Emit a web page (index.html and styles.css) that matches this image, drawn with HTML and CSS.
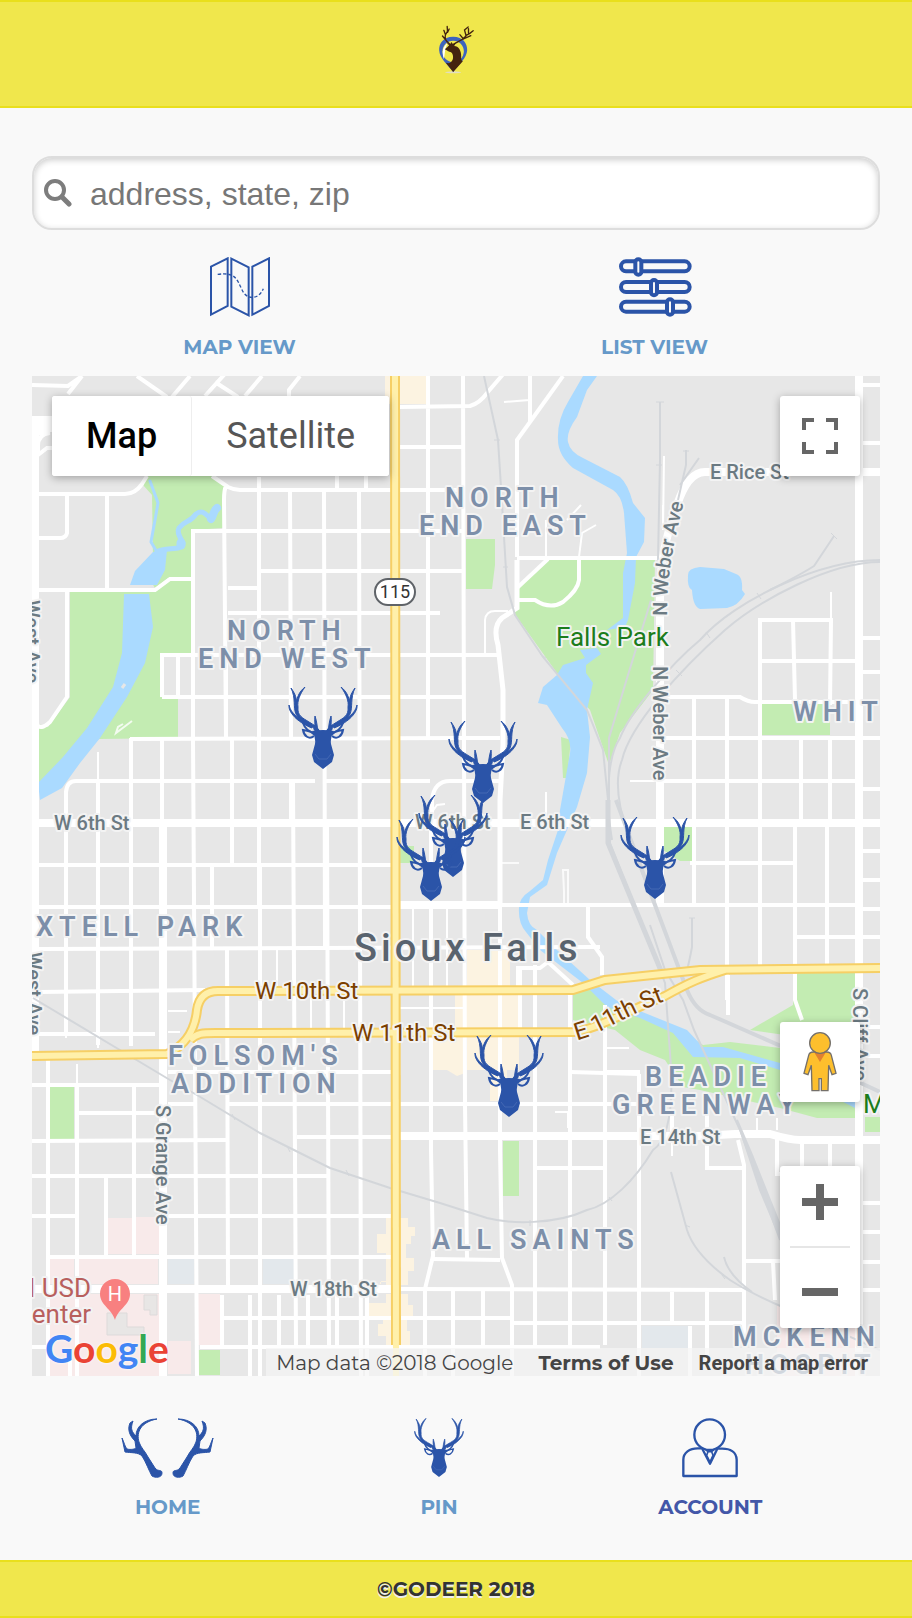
FILE: index.html
```html
<!DOCTYPE html>
<html lang="en">
<head>
  <meta charset="UTF-8">
  <meta name="viewport" content="width=device-width, initial-scale=1.0">
  <title>GoDeer</title>
  <link rel="stylesheet" href="styles.css">
</head>
<body>
  <!-- shared shapes -->
  <svg class="defs" width="0" height="0" aria-hidden="true">
    <defs>
      <g id="antler" stroke="#2b54a8" stroke-width="1">
        <path d="M28 44 C22 35 12 35 8 27 C5 21 8 11 3 1 C8 8 9 12 8 17 C9 9 12 4 17 0 C12 7 9 14 10 20 C9 29 15 31 21 35 C26 38 30 40 32 45 Z"/>
        <path d="M24 41 C13 37 0 27 1 18 C3 27 10 31 24 38 Z"/>
        <path d="M26 43 C28 38 26 34 27 29 C29 35 29 39 30 44 Z"/>
        <path d="M27 48 C22 43 20 44 15 43 C16 49 21 53 26 49" fill="none" stroke-width="2"/>
        <path d="M26 46 C19 44 16 39 15 36" fill="none" stroke-width="2"/>
      </g>
      <symbol id="deer" viewBox="0 0 70 83">
        <g fill="#2b54a8">
          <use href="#antler"/>
          <use href="#antler" transform="matrix(-1 0 0 1 70 0)"/>
          <path d="M24 44 Q35 42 46 44 Q42 50 43 57 L46 68 L44 75 L35 82 L26 75 L24 68 L27 57 Q28 50 24 44 Z"/>
          <path d="M27 67 L31 72 H39 L43 67" fill="none" stroke="#4468b4" stroke-width="1"/>
        </g>
      </symbol>
      <path id="half-antlers" stroke="#2b54a8" stroke-width="1" d="M36 1 C20 4 15 14 18 24 C20 30 24 33 27 39 L34 50 C37 54 41 51 41 55 C41 60 34 60 31 58 C28 53 25 44 21 38 C17 34 10 35 4 34 L1 20 C3 24 4 29 6 31 C10 32 14 31 15 30 L14 23 C9 18 6 12 9 5 L12 3 C9 11 11 14 15 18 C15 8 24 1 36 1 Z"/>
    </defs>
  </svg>

  <header class="header">
    <a href="#" class="logo" aria-label="GoDeer">
      <svg viewBox="0 0 110 150" width="37" height="50">
        <ellipse cx="45" cy="145" rx="24" ry="3" fill="#e3dfc0"/>
        <path d="M45 38 C14 38 2 60 3 79 C4 103 29 123 45 144 C61 123 86 102 87 79 C88 59 75 38 45 38 Z" fill="#3d63bd"/>
        <circle cx="45" cy="82" r="32" fill="#f0e74c"/>
        <path d="M30 55 C14 68 10 84 17 105 C21 92 18 76 30 55 Z" fill="#fff"/>
        <path d="M20 76 Q29 68 33 64 L25 56 L36 60 L40 54 L44 60 L54 56 L48 66 C61 66 70 80 69 98 C69 105 69 109 74 112 L45 144 L23 116 Q37 121 43 108 C48 96 42 82 33 83 Z" fill="#43240f"/>
        <g fill="none" stroke="#43240f" stroke-width="4" stroke-linecap="round">
          <path d="M34 60 C24 51 18 46 22 32 L28 22 L27 7 M22 32 L17 19 M28 25 L33 15 M21 46 L13 36"/>
          <path d="M47 60 C62 50 76 49 84 34 L95 28 L105 20 M84 36 L79 18 L90 9 M91 30 L91 14 M76 45 L65 32 M76 45 L98 35"/>
        </g>
      </svg>
    </a>
  </header>

  <main class="main">
    <form class="search">
      <label for="search" class="search-icon" aria-label="Search">
        <svg viewBox="0 0 28 28" width="28" height="28" fill="none" stroke="#7d7d7d">
          <circle cx="11" cy="11" r="9" stroke-width="4"/>
          <path d="M18 18 L25 25" stroke-width="5" stroke-linecap="round"/>
        </svg>
      </label>
      <input type="text" id="search" placeholder="address, state, zip">
    </form>

    <nav class="views">
      <a href="#">
        <svg viewBox="0 0 180 180" width="60" height="60" fill="none" stroke="#2b54a8" stroke-width="6">
          <path d="M3 29 L53 4 V147 L3 173 Z M64 5 L116 31 V175 L64 149 Z M127 29 L177 4 V147 L127 173 Z"/>
          <path d="M23 52 C75 45 80 65 95 96 C108 130 145 130 160 95" stroke-width="4" stroke-dasharray="10 6"/>
        </svg>
        <span>MAP VIEW</span>
      </a>
      <a href="#">
        <svg viewBox="0 0 220 180" width="74" height="60" fill="#f9f9f9" stroke="#2b54a8" stroke-width="12">
          <rect x="8" y="13" width="206" height="30" rx="15"/>
          <rect x="8" y="75" width="206" height="30" rx="15"/>
          <rect x="8" y="134" width="206" height="30" rx="15"/>
          <rect x="51" y="7" width="18" height="46" rx="9"/>
          <rect x="98" y="69" width="18" height="46" rx="9"/>
          <rect x="146" y="127" width="18" height="46" rx="9"/>
        </svg>
        <span>LIST VIEW</span>
      </a>
    </nav>

    <section class="map">
      <svg class="map-canvas" viewBox="32 376 848 1000">
        <!-- areas -->
        <g fill="#f8eaea">
          <path d="M107 1218H132V1254H107Z M136 1217H159V1254H136Z M49 1259H74V1284H49Z M79 1259H158V1284H79Z M49 1294H159V1376H49Z M195 1294H220V1345H195Z M168 1341H191V1374H168Z M777 1305H857V1376H777Z"/>
        </g>
        <path d="M107 1313H127V1327H144V1335H107Z M144 1295H157V1315H150V1310H144Z" fill="#e8e6e5" stroke="#dddada"/>
        <path d="M168 1259H194V1284H168Z M263 1259H294V1284H263Z M642 1326H688V1348H642Z" fill="#e3e8ec"/>
        <g fill="#fcf3e1">
          <path d="M385 376H426V404H385Z M467 950H510V1030H519V1070H467Z M455 993H519V1030H455Z M433 1037H465V1073L457 1076L447 1070H433Z M490 1070H507V1101H490Z"/>
          <path d="M386 1218H408V1227H415V1236H411V1244H406V1258H414V1271H408V1285H386V1281H381V1284H380V1282H386V1253H377V1234H386Z M386 1294H408V1305H413V1317H407V1331H410V1345H386V1336H378V1324H383V1317H369V1303H386Z"/>
        </g>
        <g fill="#c3ecb2">
          <path d="M143 485L148 476H213L226 486L223 528L193 530V578H168L155 588L150 580L153 560L152 495Z"/>
          <path d="M70 592H155L170 580H193V655H162V699H178V738L99 739L38 785V724L48 727L70 697Z"/>
          <path d="M466 539H495V565L492 589H466Z M762 704H830V735H762Z M561 737L571 740L567 778H563Z M663 827H692V861H680L663 850Z"/>
          <path d="M548 559H655L653 690L620 733L609 765L590 710L557 673L514 613L518 588Z"/>
          <path d="M573 993L590 988L620 1003L650 1020L687 1035L703 1045L730 1042L780 1048L855 1070V1118H817L780 1108L700 1090L683 1087L665 1060L640 1050L615 1030L573 1020Z"/>
          <path d="M795 973H855V1045L750 1030L793 1005Z M50 1087H74V1141H50Z M195 1350H220V1375H195Z M503 1141H519V1196H503Z M865 1117H880V1132H865Z M400 846H414V863H400Z"/>
        </g>
        <g fill="#aadaff">
          <path d="M124 594H149L153 627L145 663L127 697L100 738L80 763L62 788L40 800L38 783L63 757L87 728L113 687L122 653Z"/>
          <path d="M130 585L135 571L153 552L167 550L165 570L157 585Z"/>
          <path d="M583 376H597L587 390L577 417Q566 432 568 442Q570 452 583 458L620 477Q628 484 633 503L645 518L644 542L636 557L635 583L628 620L625 627L607 630L623 618V573L627 553L624 513Q622 496 613 490L573 468Q558 455 558 440Q557 420 568 402Z"/>
          <path d="M580 650L597 648L601 654L586 665V673L593 683L587 710L590 737L587 773L577 807L567 830L557 853L547 885L530 897L527 913Q528 926 537 930L557 950L590 980L620 1003L687 1030L703 1047H723L780 1063L855 1085V1108L780 1070L740 1058L693 1057L673 1033L640 1018L607 1007L583 983L540 950L526 932Q518 923 519 908Q519 898 530 891L543 880L548 860L558 830L560 810L570 753Q572 740 562 728L547 705L538 703L543 687L557 675L563 665L585 658Z"/>
          <path d="M688 575Q688 568 700 567L724 569L736 574Q743 576 742 590L745 594Q738 606 727 608L700 609Q693 607 692 590Q687 588 688 575Z"/>
        </g>
        <g fill="none" stroke="#aadaff" stroke-linecap="round">
          <path d="M150 481L158 503L155 520L151 542L157 552" stroke-width="3"/>
          <path d="M157 552C165 546 183 552 183 543C181 538 176 533 179 528C185 520 190 523 196 514C205 508 207 518 212 519" stroke-width="5"/>
          <path d="M211 519C214 515 213 511 217 508" stroke-width="8"/>
          <path d="M181 545V543" stroke-width="9"/>
        </g>
        <path d="M122 688L125 684" stroke="#e7e7e7" stroke-width="3"/>

        <!-- minor streets -->
        <g class="street thin">
          <path d="M98 752V781 M277 949V991 M311 998V1030 M344 998V1030 M77 1064V1085 M413 908V988 M430 908V988 M447 908V988 M399 1008H463 M168 1011H187 M168 1032H180 M66 1038V1030 M98 1038V1048 M131 1038V1046"/>
          <path d="M429 697V731 M500 863H519 M564 905V892L563 870H568V905 M132 721L116 733L118 727L123 724" stroke-opacity=".8"/>
          <path d="M546 792V820 M630 781H660 M831 592V620 M445 804L437 805L432 812 M607 1048H629 M555 1112H568V1128 M672 1115V1156 M757 1118V1130 M777 1118V1130 M529 376V400L504 402 M485 655V620Q486 611 495 611H508 M567 520L581 505 M546 557V520 M579 557L582 533L596 525 M663 505V530L664 456"/>
        </g>
        <g class="street">
          <path d="M32 385L68 386L82 376 M68 394L82 376 M137 376L167 397 M172 397L190 376 M205 396L232 366 M215 382L238 397 M245 396L262 376 M289 396V390L300 376 M32 433H50Q38 434 38 446V455L47 448H55"/>
          <path d="M38 494H125Q135 494 142 484L147 476 M67 494V533Q66 538 60 538H38 M107 494V590 M38 590H155L170 579H193 M67 592V697L50 722Q40 731 37 724 M212 476L228 487Q234 490 240 490H463 M226 486Q224 490 224 500L226 738 M193 738V531H463"/>
          <path d="M259 477V905 M290 490L291 738 M324 490L325 949 M359 490L361 1376 M337 476V490 M366 476V490 M259 571H463 M228 588H259 M228 613H440 M162 697V655H463 M178 655V697 M162 697H463 M130 739L463 738"/>
          <path d="M66 823V792Q67 781 76 781H291V823 M291 781H315 M325 781H392 M66 823V1035 M98 781V1045 M131 738V1046 M162 738V823 M193 738L197 1376 M226 655V738 M232 738V864 M212 864V949 M260 864V1376 M293 781L296 1347 M327 823L329 1347 M227 949L228 1289"/>
          <path d="M38 865H392 M38 907H392 M38 949L600 947 M38 992L205 990 M38 1034H155 M168 1072H392 M32 1085H160 M32 1141L228 1140 M78 1113H160 M168 1104H196 M228 1104H639 M297 1137H392 M32 1176H330 M32 1216H77 M168 1216H392 M48 1257H392 M223 1318H392 M32 1347H50 M200 1347H600"/>
          <path d="M48 1060V1376 M77 1085V1376 M106 1176V1257 M134 1085V1257 M77 1289V1330 M70 1350V1376 M222 1295V1345 M250 1295V1376 M279 1295V1345 M308 1295V1345 M337 1295V1345 M367 1295V1376"/>
          <path d="M428 376V738 M463 376L465 1105L467 1258 M398 407L470 406Q480 403 487 393L505 372 M399 447H463 M399 781H430 M432 823V800Q434 781 450 781H503 M465 697H440 M465 738H500 M465 655H498 M431 823V863 M431 907V1150L433 1256L425 1289V1376 M453 1289V1376 M483 1289V1347 M500 863V1150L502 1258L512 1285V1376 M535 965V1345 M570 993V1345 M605 1005V1345 M639 1074V1376"/>
          <path d="M517 557V440L530 422L563 376 M530 376V422 M517 558H657 M517 588L548 559 M579 558V580Q578 590 563 602Q550 610 535 600H518 M588 905V937L602 957V975 M518 990V968H540L548 962L573 985 M520 968V1030 M639 1074L570 1072 M605 1072H640"/>
          <path d="M760 738V620H831L830 705 M793 620L795 700 M760 661H858 M660 697H740Q748 702 755 702H850L858 706 M660 738H880 M660 781H858 M694 697V905 M727 697V1000 M760 738V968 M801 740V823 M830 738V823 M795 823V1000L802 1020 M827 823V968 M690 863H795 M430 905H858 M728 975V1015 M795 937H880 M858 789H880"/>
          <path d="M862 385H880 M862 443H880 M862 638H880 M862 672H880 M862 851H880 M862 880H880 M862 909H880 M862 1027H880 M862 1056H880 M862 1203H880 M862 1232H880 M862 1262H880 M862 1290H880"/>
          <path d="M537 1168H605 M707 1115V1168H744 M738 1140L744 1165V1345 M777 1138V1174H790 M802 1140V1170 M830 1140V1170 M672 1110V1132 M399 1289L744 1290 M399 1318H512 M512 1323H744 M432 1259L500 1260 M672 1290V1323 M707 1290V1360 M744 1261H790 M773 1261L775 1300 M690 1326V1376"/>
        </g>
        <g class="street wide">
          <path d="M35 418V1054 M163 823V1376 M163 1289H392 M32 1289H163 M38 823H392 M398 823H880 M859 376V1376 M660 600V905 M399 905H500"/>
          <path d="M32 424H56" stroke-width="16"/>
          <path d="M880 472H705C690 472 682 490 677 505C665 540 660 560 660 600"/>
          <path d="M517 560V608L502 618C494 625 495 635 498 645L503 690V745L500 800V905" stroke-width="5"/>
          <path d="M399 1136H700L735 1134H770Q790 1140 800 1140H880"/>
        </g>

        <!-- railways -->
        <g class="rail">
          <path d="M484 376L498 440L502 503L507 587L515 615L543 657L587 710L603 750L608 800L610 843L665 983L671 1067C673 1110 668 1140 653 1150C635 1180 610 1205 587 1210C555 1225 510 1224 487 1218L440 1203L390 1188L330 1168L260 1133L197 1095L170 1080L33 998"/>
          <path d="M660 402V460L658 560"/>
          <path d="M686 450V465L678 500 M699 458L680 485"/>
          <path d="M880 560C820 560 735 600 700 640C670 665 630 712 620 738C605 760 607 810 612 840"/>
          <path d="M880 562C830 562 760 600 725 630C680 670 630 725 622 760C612 785 620 820 645 880"/>
          <path d="M834 536L814 566Q800 575 770 590 M651 600L628 675L609 738V800 M692 918V947Q690 958 686 975 M650 925L665 970L683 1000L694 1030L740 1130L780 1240"/>
          <path d="M608 800V843L664 978" stroke-width="5"/>
          <path d="M616 800L652 897L687 990Q695 1010 710 1015L790 1050L880 1092" stroke-width="4"/>
          <path d="M737 1120L752 1155L780 1225L782 1242L760 1190Z" fill="#d3d6da"/>
          <path d="M671 1172L687 1230Q695 1255 730 1280Q750 1293 785 1308L880 1350 M724 1257Q728 1275 752 1292"/>
          <path d="M656 402H664 M656 465H662 M494 440H500 M503 567H508 M540 654L546 658 M609 1197L612 1201 M530 1220V1226 M346 1170L349 1176 M287 1146L290 1152 M232 1114L235 1120 M757 593L761 599 M706 632L710 638 M676 670L682 676 M683 451H689 M831 533L837 539 M689 918H695 M685 1225L690 1227 M722 1275L725 1279" stroke-width="1"/>
        </g>

        <!-- highways -->
        <g class="hwy-edge">
          <path d="M32 1056L167 1054C185 1046 195 1030 197 1010C199 996 207 991 218 991L573 990L605 980L700 970L880 968"/>
          <path d="M190 1040C197 1033 203 1033 215 1033L575 1032C600 1028 640 1005 665 996C690 982 700 978 725 970"/>
          <path d="M395 376L396 1345"/>
        </g>
        <g class="hwy">
          <path d="M32 1056L167 1054C185 1046 195 1030 197 1010C199 996 207 991 218 991L573 990L605 980L700 970L880 968"/>
          <path d="M190 1040C197 1033 203 1033 215 1033L575 1032C600 1028 640 1005 665 996C690 982 700 978 725 970"/>
          <path d="M395 376L396 1376"/>
        </g>
        <rect x="375" y="579" width="40" height="26" rx="13" fill="#fff" stroke="#5f6368" stroke-width="2"/>
        <text x="395" y="598" class="shield">115</text>

        <!-- labels -->
        <path id="weber" d="M667 616C667 580 672 545 686 495" fill="none"/>
        <path id="e11" d="M577 1040C598 1036 628 1014 668 1000" fill="none"/>
        <g class="road-label">
          <text x="54" y="830">W 6th St</text>
          <text x="415" y="829">W 6th St</text>
          <text x="520" y="829">E 6th St</text>
          <text x="710" y="479">E Rice St</text>
          <text x="640" y="1144">E 14th St</text>
          <text x="290" y="1296">W 18th St</text>
          <text><textPath href="#weber">N Weber Ave</textPath></text>
          <text transform="translate(653 666) rotate(90)">N Weber Ave</text>
          <text transform="translate(25 600) rotate(90)">West Ave</text>
          <text transform="translate(27 952) rotate(90)">West Ave</text>
          <text transform="translate(156 1105) rotate(90)">S Grange Ave</text>
          <text transform="translate(853 988) rotate(90)">S Cliff Ave</text>
        </g>
        <g class="hwy-label">
          <text x="255" y="999">W 10th St</text>
          <text x="352" y="1041">W 11th St</text>
          <text><textPath href="#e11">E 11th St</textPath></text>
        </g>
        <g class="area-label">
          <text x="227" y="640">NORTH</text>
          <text x="198" y="668">END WEST</text>
          <text x="445" y="507">NORTH</text>
          <text x="419" y="535">END EAST</text>
          <text x="793" y="721">WHIT</text>
          <text x="36" y="936">XTELL PARK</text>
          <text x="168" y="1065">FOLSOM'S</text>
          <text x="171" y="1093">ADDITION</text>
          <text x="645" y="1086">BEADIE</text>
          <text x="612" y="1114">GREENWAY</text>
          <text x="432" y="1249">ALL SAINTS</text>
          <text x="733" y="1346">MCKENN</text>
          <text x="745" y="1374">HOSPIT</text>
        </g>
        <text x="354" y="961" class="city-label">Sioux Falls</text>
        <g class="park-label">
          <text x="556" y="646">Falls Park</text>
          <text x="863" y="1113">M</text>
        </g>
        <g class="poi-label">
          <text x="91" y="1297">l USD</text>
          <text x="91" y="1323">enter</text>
        </g>
        <path d="M115 1279C106 1279 100 1286 100 1294C100 1305 112 1309 115 1320C118 1309 130 1305 130 1294C130 1286 124 1279 115 1279Z" fill="#f88080"/>
        <text x="115" y="1301" class="hospital">H</text>

        <!-- pins -->
        <use href="#deer" x="288" y="687" width="70" height="83"/>
        <use href="#deer" x="448" y="721" width="70" height="83"/>
        <use href="#deer" x="418" y="795" width="70" height="83"/>
        <use href="#deer" x="396" y="819" width="70" height="83"/>
        <use href="#deer" x="620" y="817" width="70" height="83"/>
        <use href="#deer" x="474" y="1035" width="70" height="83"/>
      </svg>

      <div class="map-type">
        <button type="button" class="active">Map</button>
        <button type="button">Satellite</button>
      </div>
      <button type="button" class="map-btn fullscreen" aria-label="Toggle fullscreen">
        <svg viewBox="0 0 36 36" width="36" height="36" fill="none" stroke="#666" stroke-width="4">
          <path d="M12 2H2V12 M24 2H34V12 M2 24V34H12 M34 24V34H24"/>
        </svg>
      </button>
      <button type="button" class="map-btn pegman" aria-label="Street View">
        <svg viewBox="0 0 100 180" width="34" height="60" fill="#fdbf2d" stroke="#75706a" stroke-width="4">
          <path d="M30 60H70Q82 60 84 70L98 124L86 128L76 100L74 176H54V140H47V176H26L24 100L14 128L2 124L16 70Q18 60 30 60Z"/>
          <path d="M32 60H68L50 90Z" fill="#e08030" stroke="none"/>
          <circle cx="50" cy="33" r="31"/>
        </svg>
      </button>
      <div class="zoom">
        <button type="button" aria-label="Zoom in">
          <svg viewBox="0 0 36 36" width="36" height="36"><path d="M14 0H22V14H36V22H22V36H14V22H0V14H14Z" fill="#666"/></svg>
        </button>
        <button type="button" aria-label="Zoom out">
          <svg viewBox="0 0 36 36" width="36" height="36"><path d="M0 14H36V22H0Z" fill="#666"/></svg>
        </button>
      </div>
      <a href="#" class="google"><span class="b">G</span><span class="r">o</span><span class="y">o</span><span class="b">g</span><span class="g">l</span><span class="r">e</span></a>
      <div class="attribution">
        <span>Map data ©2018 Google</span>
        <a href="#">Terms of Use</a>
        <a href="#" class="report">Report a map error</a>
      </div>
    </section>

    <nav class="bottom-nav">
      <a href="#">
        <svg viewBox="0 0 93 60" width="93" height="60" fill="#2b54a8">
          <use href="#half-antlers"/>
          <use href="#half-antlers" transform="matrix(-1 0 0 1 93 0)"/>
        </svg>
        <span>HOME</span>
      </a>
      <a href="#">
        <svg width="50" height="60"><use href="#deer" width="50" height="60"/></svg>
        <span>PIN</span>
      </a>
      <a href="#" class="current">
        <svg viewBox="0 0 168 180" width="56" height="60" fill="none" stroke="#2b54a8" stroke-width="7" stroke-linejoin="round">
          <circle cx="83" cy="50" r="46"/>
          <path d="M60 91H50C22 90 4 105 4 125V174H164V125C163 103 145 91 117 92H106L84 137L60 91"/>
          <path d="M70 94L78 101H89L97 94 M78 101L74 112L84 132L93 112L89 101" stroke-width="5"/>
        </svg>
        <span>ACCOUNT</span>
      </a>
    </nav>
  </main>

  <footer class="footer">©GODEER 2018</footer>
</body>
</html>
```
FILE: styles.css
```css
* { box-sizing: border-box; }
body {
  margin: 0;
  background: #f9f9f9;
  font-family: Montserrat, Inter, sans-serif;
  font-size: 20px;
  line-height: 24px;
  color: #333;
}
a { text-decoration: none; }
button {
  border: none;
  padding: 0;
  background: #fff;
  cursor: pointer;
}
.defs { position: absolute; }
.header, .footer {
  background: #f0e74c;
  border-top: 2px solid #e9df1c;
  border-bottom: 2px solid #e9df1c;
}
.header {
  display: flex;
  justify-content: center;
  padding: 22px 0 32px;
}
.logo svg { display: block; }
.main { padding: 48px 32px 0; }

/* search */
.search {
  display: flex;
  align-items: center;
  height: 74px;
  padding: 0 10px;
  background: #fff;
  border: 2px solid #ddd;
  border-radius: 20px;
  box-shadow: inset 0 2px 6px rgba(0, 0, 0, 0.2);
}
.search-icon { display: flex; }
.search input {
  flex: 1;
  min-width: 0;
  margin-left: 18px;
  padding: 2px 0 0;
  border: none;
  outline: none;
  background: none;
  font-family: "Liberation Sans", sans-serif;
  font-size: 32px;
  color: #333;
}
.search input::placeholder { color: #777; }

/* navs */
.views, .bottom-nav { display: grid; }
.views {
  grid-template-columns: 1fr 1fr;
  padding: 27px 18px 17px 0;
}
.bottom-nav {
  grid-template-columns: 1fr 1fr 1fr;
  padding: 42px 34px 41px 0;
}
.views a, .bottom-nav a {
  display: flex;
  flex-direction: column;
  align-items: center;
  gap: 18px;
  font-weight: 700;
  color: #6699c9;
}
.bottom-nav a { gap: 17px; }
.bottom-nav .current { color: #4357a8; }

/* map */
.map {
  position: relative;
  overflow: hidden;
  background: #e7e7e7;
  font-family: Roboto, sans-serif;
}
.map-canvas {
  display: block;
  width: 100%;
}
.street {
  fill: none;
  stroke: #fff;
  stroke-width: 4;
}
.thin { stroke-width: 2; }
.wide { stroke-width: 8; }
.rail {
  fill: none;
  stroke: #d3d6da;
  stroke-width: 2;
}
.hwy-edge {
  fill: none;
  stroke: #f6cf65;
  stroke-width: 10;
}
.hwy {
  fill: none;
  stroke: #fff0aa;
  stroke-width: 6;
}
.map-canvas text {
  paint-order: stroke;
  stroke: #f3f3f3;
  stroke-width: 4px;
  stroke-linejoin: round;
}
.road-label {
  font-size: 20px;
  font-weight: 500;
  fill: #6b7a82;
}
.hwy-label {
  font-size: 24px;
  fill: #7b3f00;
}
.area-label {
  font-size: 27px;
  font-weight: 600;
  letter-spacing: 6px;
  fill: #7d8fa9;
}
.city-label {
  font-size: 38px;
  font-weight: 500;
  letter-spacing: 4px;
  fill: #59636e;
}
.park-label {
  font-size: 26px;
  fill: #1c7d1c;
}
.poi-label {
  font-size: 26px;
  text-anchor: end;
  fill: #b85f5d;
}
.map-canvas .shield, .map-canvas .hospital {
  stroke: none;
  text-anchor: middle;
}
.shield { font-size: 18px; fill: #333; }
.hospital { font-size: 20px; fill: #fff; }

/* map controls */
.map-type, .map-btn, .zoom {
  position: absolute;
  border-radius: 3px;
  box-shadow: 0 2px 8px rgba(0, 0, 0, 0.3);
}
.map-type {
  top: 20px;
  left: 20px;
  display: flex;
  height: 80px;
  background: #fff;
}
.map-type button {
  padding: 0 34px;
  border-radius: 3px;
  font-family: Roboto, sans-serif;
  font-size: 36px;
  color: #565656;
}
.map-type .active {
  font-weight: 500;
  color: #000;
  border-right: 1px solid #eee;
}
.map-btn {
  right: 20px;
  display: flex;
  align-items: center;
  justify-content: center;
  width: 80px;
  height: 80px;
}
.fullscreen { top: 20px; }
.pegman { bottom: 274px; }
.zoom {
  right: 20px;
  bottom: 48px;
  width: 80px;
  padding: 0 10px;
  background: #fff;
}
.zoom button {
  display: flex;
  align-items: center;
  justify-content: center;
  width: 100%;
  height: 80px;
  padding-top: 8px;
}
.zoom button:first-child {
  height: 82px;
  padding: 0 0 8px;
  border-bottom: 2px solid #e6e6e6;
}
.google {
  position: absolute;
  left: 13px;
  bottom: 8px;
  font-family: "Product Sans", Lato, sans-serif;
  font-size: 39px;
  line-height: 40px;
  font-weight: 700;
  text-shadow: 0 0 3px #fff;
}
.google .b { color: #4285f4; }
.google .r { color: #ea4335; }
.google .y { color: #fbbc05; }
.google .g { color: #34a853; }
.attribution {
  position: absolute;
  right: 0;
  bottom: 0;
  display: flex;
  gap: 25px;
  padding: 3px 12px 1px 10px;
  background: rgba(245, 245, 245, 0.7);
  font-family: Montserrat, Inter, sans-serif;
  color: #444;
}
.attribution a { font-weight: 700; color: #444; }
.attribution .report { font-family: Roboto, sans-serif; }

.footer {
  padding: 15px 0;
  text-align: center;
  font-weight: 700;
  text-shadow: 0 2px 0 #eee;
}
```
